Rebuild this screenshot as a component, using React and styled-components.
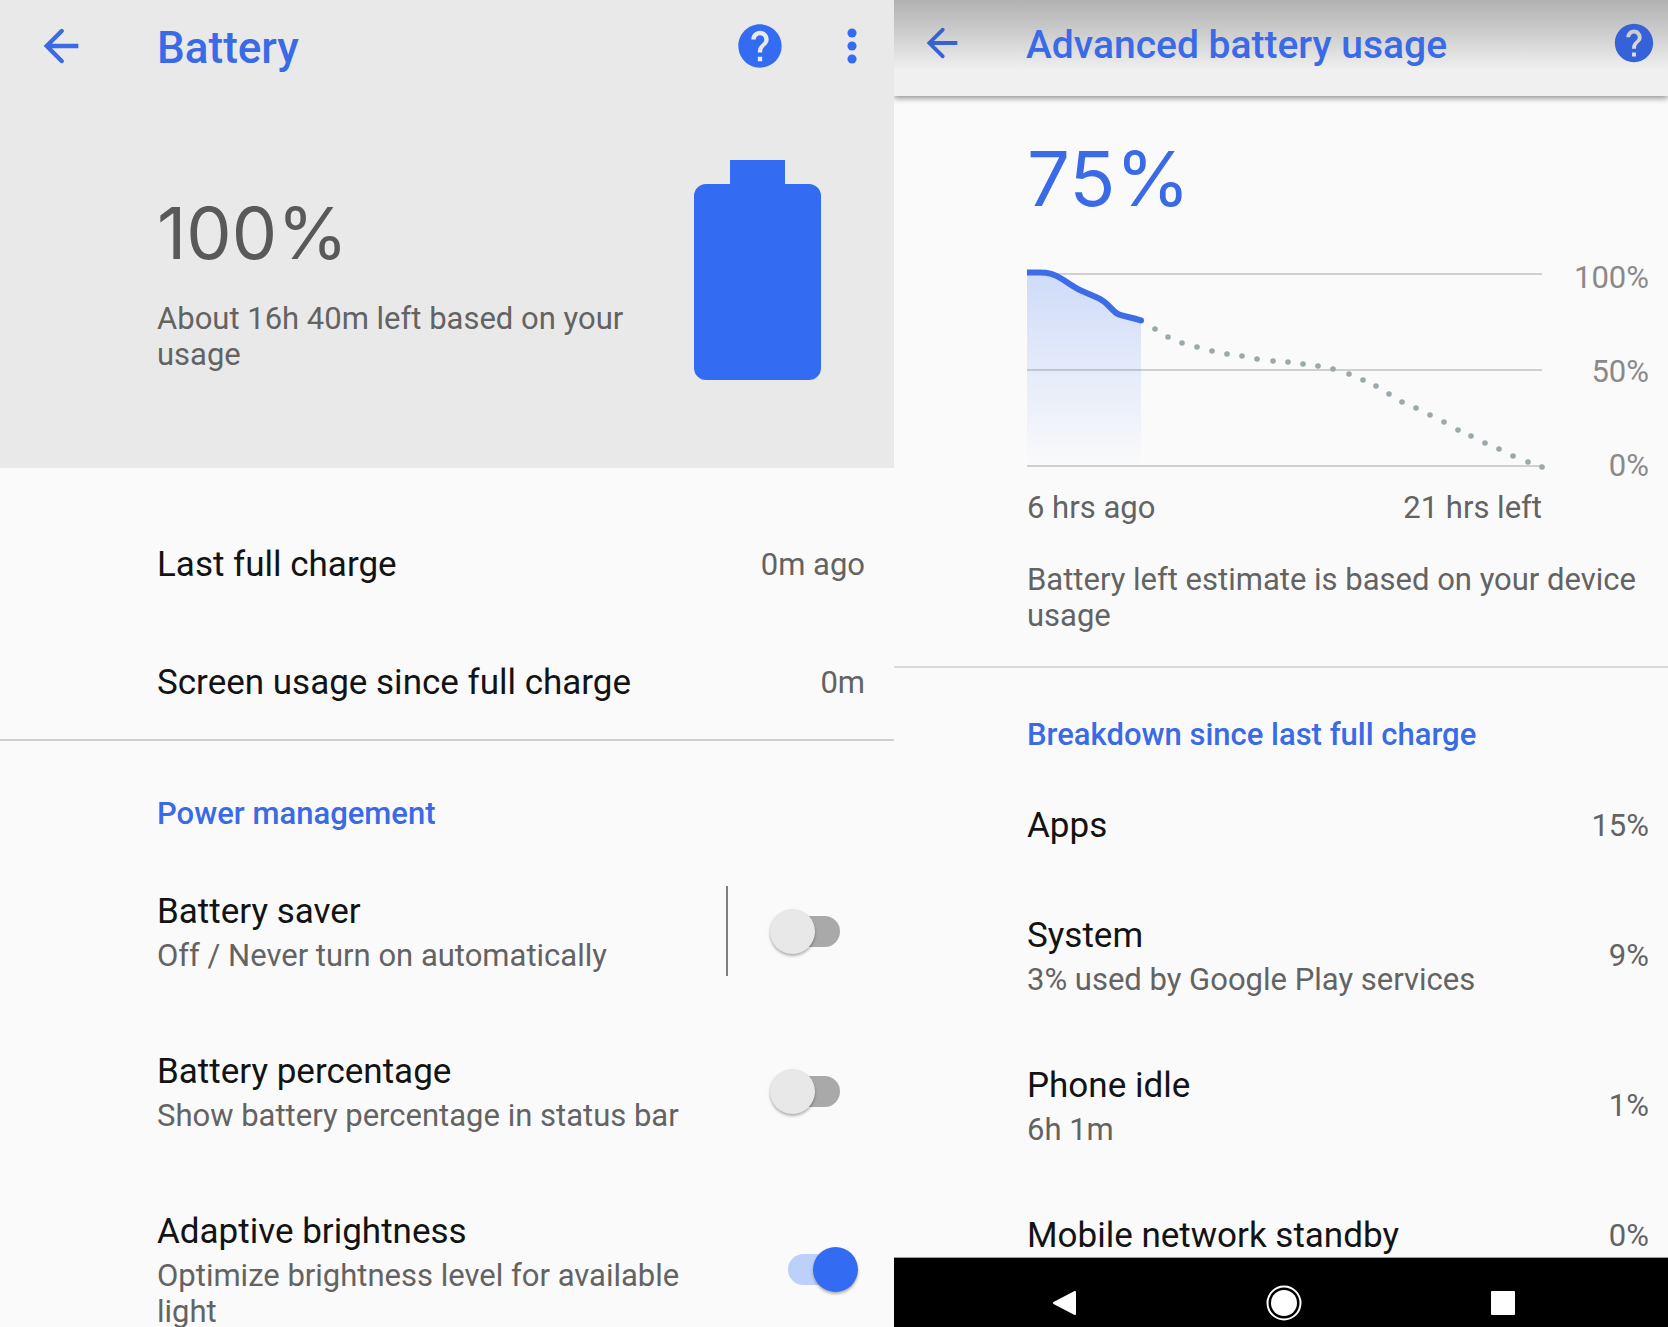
import React, { useState } from "react";
import styled, { createGlobalStyle, css } from "styled-components";

const color = {
  page: "#fafafa",
  hero: "#e9e9e9",
  blue: "#336cf3",
  heading: "#3b6ae6",
  text: "#131313",
  muted: "#636363",
  faint: "#8a8a8a",
  rule: "#cfcfcf",
};

const GlobalStyle = createGlobalStyle`
  * { box-sizing: border-box; }
  body {
    margin: 0;
    background: ${color.page};
    color: ${color.text};
    font-family: Roboto, "Liberation Sans", sans-serif;
  }
  h1, h2, p { margin: 0; font-weight: 400; }
`;

const Screens = styled.div`
  display: grid;
  grid-template-columns: 894fr 774fr;
  height: 100vh;
  overflow: hidden;
`;

const Screen = styled.main`
  display: flex;
  flex-direction: column;
  min-width: 0;
  min-height: 0;
  overflow: hidden;
`;

/* Toolbar */

const Toolbar = styled.header`
  display: flex;
  flex: none;
  align-items: center;
  ${(p) =>
    p.$raised
      ? css`
          height: 96px;
          padding: 0 11px 10px 25px;
          background: linear-gradient(#b1b1b1 0, #cccccc 32px, #f0f0f0 70px);
          box-shadow: 0 2px 6px rgba(0, 0, 0, 0.45);
        `
      : css`
          height: 92px;
          padding: 0 16px 0 35px;
        `}
`;

const IconButton = styled.button`
  display: block;
  flex: none;
  padding: 0;
  border: 0;
  background: none;
  color: ${(p) => p.$tint || color.blue};
  cursor: pointer;

  svg {
    display: block;
    width: ${(p) => p.$size}px;
    height: ${(p) => p.$size}px;
    fill: currentColor;
  }
`;

const Title = styled.h1`
  flex: 1;
  padding-top: 4px;
  margin-left: ${(p) => (p.$compact ? 61 : 70)}px;
  color: ${color.heading};
  font-size: ${(p) => (p.$compact ? 39 : 44)}px;
  line-height: 52px;
  font-weight: 500;
  white-space: nowrap;
`;

const Actions = styled.div`
  display: flex;
  gap: 40px;
`;

/* Battery summary */

const Hero = styled.section`
  flex: none;
  height: 468px;
  background: ${color.hero};
`;

const Summary = styled.div`
  display: flex;
  justify-content: space-between;
  padding: 68px 73px 0 157px;

  svg {
    flex: none;
    fill: ${color.blue};
  }
`;

const SummaryText = styled.div`
  padding: 33px 60px 0 0;
`;

const Level = styled.p`
  font-family: Inter, "Liberation Sans", sans-serif;
  font-size: ${(p) => (p.$accent ? 76 : 72)}px;
  line-height: ${(p) => (p.$accent ? 88 : 80)}px;
  color: ${(p) => (p.$accent ? color.heading : "#595959")};
`;

const Note = styled.p`
  margin-top: ${(p) => p.$gap}px;
  color: ${color.muted};
  font-size: 31px;
  line-height: 36px;
`;

/* Rows */

const Facts = styled.section`
  display: flex;
  flex: none;
  flex-direction: column;
  gap: 74px;
  padding: 75px 29px 34px 157px;
  border-bottom: 2px solid ${color.rule};
`;

const Fact = styled.div`
  display: flex;
  align-items: center;
  justify-content: space-between;
`;

const RowTitle = styled.div`
  font-size: 35px;
  line-height: 44px;
`;

const RowNote = styled.div`
  margin-top: 4px;
  color: ${color.muted};
  font-size: 31px;
  line-height: 36px;
`;

const Value = styled.div`
  color: ${color.muted};
  font-size: 31px;
  line-height: 36px;
`;

const SectionTitle = styled.h2`
  flex: none;
  padding: ${(p) => p.$pad};
  color: ${color.heading};
  font-size: 31px;
  line-height: 36px;
  font-weight: 500;
`;

const SettingRow = styled.div`
  display: flex;
  flex: none;
  padding: 38px 0 38px 157px;
`;

const SettingLabel = styled.label`
  display: block;
  flex: 1;
  min-width: 0;
  cursor: pointer;
`;

const Widget = styled.div`
  display: flex;
  flex: none;
  align-items: center;
  justify-content: flex-end;
  width: 168px;
  margin: -4px 0 -2px;
  padding-right: 36px;
  border-left: 2px solid ${(p) => (p.$divided ? "#7f7f7f" : "transparent")};
`;

const Switch = styled.input.attrs({ type: "checkbox", role: "switch" })`
  position: relative;
  appearance: none;
  width: 88px;
  height: 45px;
  margin: 0;
  cursor: pointer;

  &::before {
    content: "";
    position: absolute;
    top: 7px;
    left: 18px;
    width: 52px;
    height: 31px;
    border-radius: 16px;
    background: #a9a9a9;
  }

  &::after {
    content: "";
    position: absolute;
    top: 0;
    left: 0;
    width: 45px;
    height: 45px;
    border-radius: 50%;
    background: #e8e8e8;
    box-shadow: 0 2px 3px rgba(0, 0, 0, 0.3);
  }

  &:checked::before {
    background: #bdd0fa;
  }

  &:checked::after {
    left: 43px;
    background: ${color.blue};
  }
`;

/* Usage history */

const History = styled.section`
  flex: none;
  padding: 38px 19px 32px 133px;
  border-bottom: 2px solid #dadada;
`;

const Chart = styled.div`
  display: flex;
  align-items: flex-start;
  margin-top: 37px;
`;

const Plot = styled.svg`
  flex: 1;
  min-width: 0;
  height: 224px;
  overflow: visible;
`;

const Scale = styled.div`
  display: flex;
  flex: none;
  flex-direction: column;
  gap: 58px;
  width: 107px;
  padding-top: 1px;
  color: ${color.faint};
  font-size: 31px;
  line-height: 36px;
  text-align: right;
`;

const TimeAxis = styled.div`
  display: flex;
  justify-content: space-between;
  margin: 6px 107px 0 0;
  color: ${color.muted};
  font-size: 31px;
  line-height: 36px;
`;

const UsageList = styled.div`
  flex: 1;
  min-height: 0;
  overflow: hidden;
`;

const UsageRow = styled.div`
  display: flex;
  align-items: center;
  justify-content: space-between;
  padding: 33px 19px 33px 133px;
`;

const NavBar = styled.nav`
  display: flex;
  flex: none;
  align-items: center;
  justify-content: center;
  height: 70px;
  padding: 20px 0 0 6px;
  border-top: 1px solid #9a9a9a;
  background: #000;
`;

const NavButton = styled.button`
  display: flex;
  justify-content: center;
  width: 219px;
  padding: 0;
  border: 0;
  background: none;
  cursor: pointer;
`;

const BackIcon = () => (
  <svg viewBox="0 0 24 24" aria-hidden="true">
    <path d="M20 11H7.83l5.3-5.3a1 1 0 0 0-1.41-1.41L4 12l7.72 7.71a1 1 0 0 0 1.41-1.41L7.83 13H20z" />
  </svg>
);

const HelpIcon = () => (
  <svg viewBox="0 0 24 24" aria-hidden="true">
    <path d="M12 2C6.48 2 2 6.48 2 12s4.48 10 10 10 10-4.48 10-10S17.52 2 12 2zm1 17h-2v-2h2v2zm2.07-7.75l-.9.92C13.45 12.9 13 13.5 13 15h-2v-.5c0-1.1.45-2.1 1.17-2.83l1.24-1.26c.37-.36.59-.86.59-1.41 0-1.1-.9-2-2-2s-2 .9-2 2H8c0-2.21 1.79-4 4-4s4 1.79 4 4c0 .88-.36 1.68-.93 2.25z" />
  </svg>
);

const MoreIcon = () => (
  <svg viewBox="0 0 24 24" aria-hidden="true">
    <circle cx="12" cy="6" r="2.1" />
    <circle cx="12" cy="12" r="2.1" />
    <circle cx="12" cy="18" r="2.1" />
  </svg>
);

const BatteryIcon = () => (
  <svg width="127" height="220" viewBox="0 0 127 220" aria-hidden="true">
    <path d="M36 0h55v24h24a12 12 0 0 1 12 12v172a12 12 0 0 1-12 12H12a12 12 0 0 1-12-12V36a12 12 0 0 1 12-12h24z" />
  </svg>
);

const projection = [
  [128, 70], [141, 78], [155, 84], [170, 88], [185, 92], [200, 95], [215, 97],
  [230, 100], [246, 102], [261, 103], [276, 105], [291, 107], [306, 110],
  [322, 115], [336, 121], [349, 127], [362, 135], [375, 143], [389, 149],
  [403, 156], [417, 163], [431, 171], [444, 177], [458, 184], [472, 190],
  [486, 197], [501, 203], [515, 208],
];

const curve =
  "M0 13.5H12C22 13.5 27 15 35 20S48 29 55 32L70 38.500C82 43.500 84 52 92 55.500C98 58 105 58 114 61.500";

const HistoryPlot = () => (
  <Plot viewBox="0 0 515 224" preserveAspectRatio="none" role="img" aria-label="Battery level over time">
    <defs>
      <linearGradient id="level-fill" x1="0" y1="0" x2="0" y2="1">
        <stop offset="0" stopColor={color.blue} stopOpacity="0.22" />
        <stop offset="1" stopColor={color.blue} stopOpacity="0" />
      </linearGradient>
    </defs>
    <g stroke="#000" strokeOpacity="0.17" strokeWidth="2">
      <path d="M0 15H515M0 111H515M0 207H515" />
    </g>
    <path d={`${curve}V207H0Z`} fill="url(#level-fill)" />
    <path d={curve} fill="none" stroke="#3e6ce6" strokeWidth="6" />
    <circle cx="114" cy="61.5" r="3" fill="#3e6ce6" />
    {projection.map(([x, y]) => (
      <circle key={x} cx={x} cy={y} r="2.8" fill="#9ba8ac" />
    ))}
  </Plot>
);

const settings = [
  { id: "saver", title: "Battery saver", note: "Off / Never turn on automatically", divided: true },
  { id: "percentage", title: "Battery percentage", note: "Show battery percentage in status bar" },
  { id: "brightness", title: "Adaptive brightness", note: "Optimize brightness level for available light" },
];

const usage = [
  { title: "Apps", value: "15%" },
  { title: "System", note: "3% used by Google Play services", value: "9%" },
  { title: "Phone idle", note: "6h 1m", value: "1%" },
  { title: "Mobile network standby", value: "0%" },
];

function BatteryScreen() {
  const [on, setOn] = useState({ brightness: true });
  return (
    <Screen>
      <Hero>
        <Toolbar>
          <IconButton $size={52} $tint={color.heading} aria-label="Back"><BackIcon /></IconButton>
          <Title>Battery</Title>
          <Actions>
            <IconButton $size={52} aria-label="Help"><HelpIcon /></IconButton>
            <IconButton $size={52} aria-label="More options"><MoreIcon /></IconButton>
          </Actions>
        </Toolbar>
        <Summary>
          <SummaryText>
            <Level>100%</Level>
            <Note $gap={28}>About 16h 40m left based on your usage</Note>
          </SummaryText>
          <BatteryIcon />
        </Summary>
      </Hero>
      <Facts>
        <Fact>
          <RowTitle>Last full charge</RowTitle>
          <Value>0m ago</Value>
        </Fact>
        <Fact>
          <RowTitle>Screen usage since full charge</RowTitle>
          <Value>0m</Value>
        </Fact>
      </Facts>
      <SectionTitle $pad="55px 0 20px 157px">Power management</SectionTitle>
      {settings.map((s) => (
        <SettingRow key={s.id}>
          <SettingLabel htmlFor={s.id}>
            <RowTitle>{s.title}</RowTitle>
            <RowNote>{s.note}</RowNote>
          </SettingLabel>
          <Widget $divided={s.divided}>
            <Switch
              id={s.id}
              checked={Boolean(on[s.id])}
              onChange={(e) => setOn({ ...on, [s.id]: e.target.checked })}
            />
          </Widget>
        </SettingRow>
      ))}
    </Screen>
  );
}

function UsageScreen() {
  return (
    <Screen>
      <Toolbar $raised>
        <IconButton $size={46} $tint="#3862cf" aria-label="Back"><BackIcon /></IconButton>
        <Title $compact>Advanced battery usage</Title>
        <IconButton $size={46} $tint="#3562d8" aria-label="Help"><HelpIcon /></IconButton>
      </Toolbar>
      <UsageList>
        <History>
          <Level $accent>75%</Level>
          <Chart>
            <HistoryPlot />
            <Scale>
              <span>100%</span>
              <span>50%</span>
              <span>0%</span>
            </Scale>
          </Chart>
          <TimeAxis>
            <span>6 hrs ago</span>
            <span>21 hrs left</span>
          </TimeAxis>
          <Note $gap={36}>Battery left estimate is based on your device usage</Note>
        </History>
        <SectionTitle $pad="49px 0 18px 133px">Breakdown since last full charge</SectionTitle>
        {usage.map((u) => (
          <UsageRow key={u.title}>
            <div>
              <RowTitle>{u.title}</RowTitle>
              {u.note && <RowNote>{u.note}</RowNote>}
            </div>
            <Value>{u.value}</Value>
          </UsageRow>
        ))}
      </UsageList>
      <NavBar>
        <NavButton aria-label="Back">
          <svg width="36" height="36" viewBox="0 0 36 36" fill="#fff" stroke="#fff" strokeWidth="2" strokeLinejoin="round">
            <path d="M7 18L28 7v22z" />
          </svg>
        </NavButton>
        <NavButton aria-label="Home">
          <svg width="36" height="36" viewBox="0 0 36 36" fill="#fff">
            <circle cx="18" cy="18" r="13" />
            <circle cx="18" cy="18" r="16.5" fill="none" stroke="#fff" strokeWidth="2" />
          </svg>
        </NavButton>
        <NavButton aria-label="Recent apps">
          <svg width="36" height="36" viewBox="0 0 36 36" fill="#fff">
            <rect x="6" y="6" width="24" height="24" rx="1" />
          </svg>
        </NavButton>
      </NavBar>
    </Screen>
  );
}

export default function App() {
  return (
    <>
      <GlobalStyle />
      <Screens>
        <BatteryScreen />
        <UsageScreen />
      </Screens>
    </>
  );
}
